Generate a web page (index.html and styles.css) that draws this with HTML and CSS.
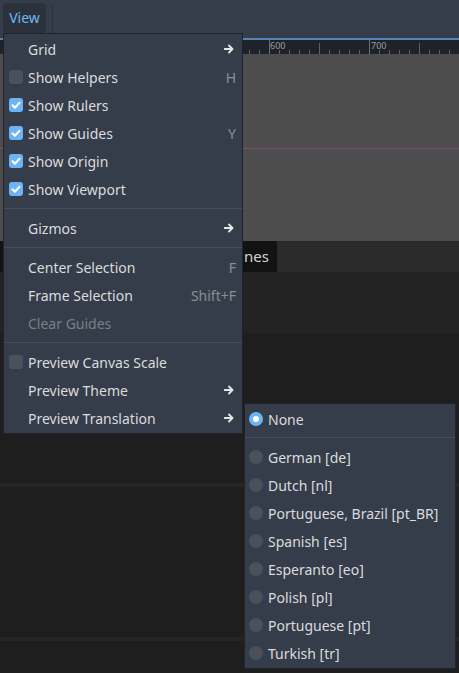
FILE: index.html
```html
<!DOCTYPE html>
<html>
<head>
<meta charset="utf-8">
<link rel="stylesheet" href="styles.css">
</head>
<body>
<div class="screen">
  <div class="topbar">
    <div class="view-btn">View</div>
    <div class="vsep"></div>
  </div>
  <div class="ruler-line"></div>
  <div class="ruler">
    <svg class="ticks" width="459" height="14" viewBox="0 0 459 14">
      <g stroke="#5d616a" stroke-width="1">
        <path d="M249.5 10v4M259.5 10v4M279.5 10v4M289.5 10v4M299.5 10v4M309.5 10v4M329.5 10v4M339.5 10v4M349.5 10v4M359.5 10v4M379.5 10v4M389.5 10v4M399.5 10v4M409.5 10v4M429.5 10v4M439.5 10v4M449.5 10v4"/>
        <path d="M319.5 3v11M419.5 3v11"/>
      </g>
      <path d="M269.5 0v14M369.5 0v14" stroke="#6b6f77" stroke-width="1"/>
    </svg>
    <span class="rlabel l600">600</span>
    <span class="rlabel l700">700</span>
  </div>
  <div class="canvas">
    <div class="guide"></div>
  </div>
  <div class="tabbar">
    <div class="tab">nes</div>
  </div>
  <div class="panel"></div>
  <div class="dock">
    <div class="strip s1"></div>
    <div class="strip s2"></div>
  </div>

  <div class="menu main-menu">
    <div class="item"><span class="nobox"></span><span class="label">Grid</span><svg class="arrow" width="10" height="10" viewBox="0 0 10 10"><path d="M0.5 5h7.5M5 1.5l3.5 3.5-3.5 3.5" fill="none" stroke="#e6e6e6" stroke-width="1.8" stroke-linecap="round" stroke-linejoin="round"/></svg></div>
    <div class="item"><span class="box"></span><span class="label">Show Helpers</span><span class="shortcut">H</span></div>
    <div class="item"><span class="box on"><svg width="14" height="14" viewBox="0 0 14 14"><path d="M3.5 7.3l2.4 2.4 4.6-5" fill="none" stroke="#fff" stroke-width="2" stroke-linecap="round" stroke-linejoin="round"/></svg></span><span class="label">Show Rulers</span></div>
    <div class="item"><span class="box on"><svg width="14" height="14" viewBox="0 0 14 14"><path d="M3.5 7.3l2.4 2.4 4.6-5" fill="none" stroke="#fff" stroke-width="2" stroke-linecap="round" stroke-linejoin="round"/></svg></span><span class="label">Show Guides</span><span class="shortcut">Y</span></div>
    <div class="item"><span class="box on"><svg width="14" height="14" viewBox="0 0 14 14"><path d="M3.5 7.3l2.4 2.4 4.6-5" fill="none" stroke="#fff" stroke-width="2" stroke-linecap="round" stroke-linejoin="round"/></svg></span><span class="label">Show Origin</span></div>
    <div class="item"><span class="box on"><svg width="14" height="14" viewBox="0 0 14 14"><path d="M3.5 7.3l2.4 2.4 4.6-5" fill="none" stroke="#fff" stroke-width="2" stroke-linecap="round" stroke-linejoin="round"/></svg></span><span class="label">Show Viewport</span></div>
    <div class="sep"></div>
    <div class="item"><span class="nobox"></span><span class="label">Gizmos</span><svg class="arrow" width="10" height="10" viewBox="0 0 10 10"><path d="M0.5 5h7.5M5 1.5l3.5 3.5-3.5 3.5" fill="none" stroke="#e6e6e6" stroke-width="1.8" stroke-linecap="round" stroke-linejoin="round"/></svg></div>
    <div class="sep"></div>
    <div class="item"><span class="nobox"></span><span class="label">Center Selection</span><span class="shortcut">F</span></div>
    <div class="item"><span class="nobox"></span><span class="label">Frame Selection</span><span class="shortcut">Shift+F</span></div>
    <div class="item disabled"><span class="nobox"></span><span class="label">Clear Guides</span></div>
    <div class="sep"></div>
    <div class="item"><span class="box"></span><span class="label">Preview Canvas Scale</span></div>
    <div class="item"><span class="nobox"></span><span class="label">Preview Theme</span><svg class="arrow" width="10" height="10" viewBox="0 0 10 10"><path d="M0.5 5h7.5M5 1.5l3.5 3.5-3.5 3.5" fill="none" stroke="#e6e6e6" stroke-width="1.8" stroke-linecap="round" stroke-linejoin="round"/></svg></div>
    <div class="item"><span class="nobox"></span><span class="label">Preview Translation</span><svg class="arrow" width="10" height="10" viewBox="0 0 10 10"><path d="M0.5 5h7.5M5 1.5l3.5 3.5-3.5 3.5" fill="none" stroke="#e6e6e6" stroke-width="1.8" stroke-linecap="round" stroke-linejoin="round"/></svg></div>
  </div>

  <div class="menu sub-menu">
    <div class="item"><span class="radio on"></span><span class="label">None</span></div>
    <div class="sep"></div>
    <div class="item"><span class="radio"></span><span class="label">German [de]</span></div>
    <div class="item"><span class="radio"></span><span class="label">Dutch [nl]</span></div>
    <div class="item"><span class="radio"></span><span class="label">Portuguese, Brazil [pt_BR]</span></div>
    <div class="item"><span class="radio"></span><span class="label">Spanish [es]</span></div>
    <div class="item"><span class="radio"></span><span class="label">Esperanto [eo]</span></div>
    <div class="item"><span class="radio"></span><span class="label">Polish [pl]</span></div>
    <div class="item"><span class="radio"></span><span class="label">Portuguese [pt]</span></div>
    <div class="item"><span class="radio"></span><span class="label">Turkish [tr]</span></div>
  </div>
</div>
</body>
</html>
```

FILE: styles.css
```css
* { box-sizing: border-box; }
html, body { margin: 0; padding: 0; }
body {
  background: #1e1e1e;
  font-family: "Noto Sans", "Open Sans", sans-serif;
  font-size: 14px;
  overflow: hidden;
}
.screen {
  position: relative;
  width: 459px;
  height: 673px;
  overflow: hidden;
  display: flex;
  flex-direction: column;
}
.topbar {
  height: 38px;
  background: #363d4a;
  display: flex;
  align-items: flex-start;
  padding: 3px 0 0 3px;
  gap: 6px;
}
.view-btn {
  width: 43px;
  height: 30px;
  background: #2c323c;
  border-radius: 4px;
  color: #6fb6f5;
  display: flex;
  align-items: center;
  justify-content: center;
  line-height: 1;
}
.vsep {
  width: 1px;
  height: 30px;
  background: #2b313b;
}
.ruler-line {
  height: 2px;
  background: #5684b4;
}
.ruler {
  position: relative;
  height: 14px;
  background: #1f2229;
}
.ticks { display: block; }
.rlabel {
  position: absolute;
  top: 0;
  font-size: 9px;
  line-height: 11px;
  color: #9a9da3;
}
.l600 { left: 270px; }
.l700 { left: 371px; }
.canvas {
  height: 187px;
  background: #4d4d4d;
  padding-top: 94px;
}
.guide {
  height: 1px;
  background: #82497d;
}
.tabbar {
  height: 31px;
  background: #2b2b2b;
  display: flex;
}
.tab {
  width: 277px;
  background: #121212;
  color: #d2d2d2;
  display: flex;
  align-items: center;
  justify-content: flex-end;
  padding-right: 8px;
  padding-bottom: 1px;
  font-size: 15px;
}
.panel {
  height: 61px;
  background: #232323;
}
.dock {
  flex: 1;
  background: #1e1e1e;
  padding-top: 150px;
}
.strip {
  height: 4px;
  background: #252525;
}
.s2 { margin-top: 150px; }

.menu {
  position: absolute;
  background: #363d4a;
  border: 1px solid #1f232b;
  padding: 1px 0;
  color: #dadbde;
}
.main-menu {
  left: 3px;
  top: 33px;
  width: 240px;
}
.sub-menu {
  left: 244px;
  top: 403px;
  width: 212px;
}
.item {
  height: 28px;
  display: flex;
  align-items: center;
  padding: 0 6px 0 5px;
  white-space: nowrap;
}
.sub-menu .item { padding-left: 4px; }
.box, .nobox {
  width: 14px;
  height: 14px;
  flex: none;
  margin-right: 5px;
}
.box {
  background: #4b515c;
  border-radius: 3px;
}
.box.on {
  background: #6db4f6;
}
.box svg { display: block; }
.label { flex: 1; }
.shortcut { color: #8a8e95; }
.disabled .label { color: #7a7e86; }
.arrow { flex: none; margin-right: 2px; }
.sep {
  height: 11px;
  padding-top: 5px;
}
.sub-menu .sep {
  height: 10px;
  padding-top: 4px;
}
.sep::before {
  content: "";
  display: block;
  height: 1px;
  background: #474e5a;
}
.radio {
  width: 14px;
  height: 14px;
  flex: none;
  border-radius: 50%;
  background: #4b515c;
  margin-right: 5px;
  position: relative;
}
.radio.on { background: #6db4f6; }
.radio.on::after {
  content: "";
  position: absolute;
  left: 4px;
  top: 4px;
  width: 6px;
  height: 6px;
  border-radius: 50%;
  background: #fff;
}
```
